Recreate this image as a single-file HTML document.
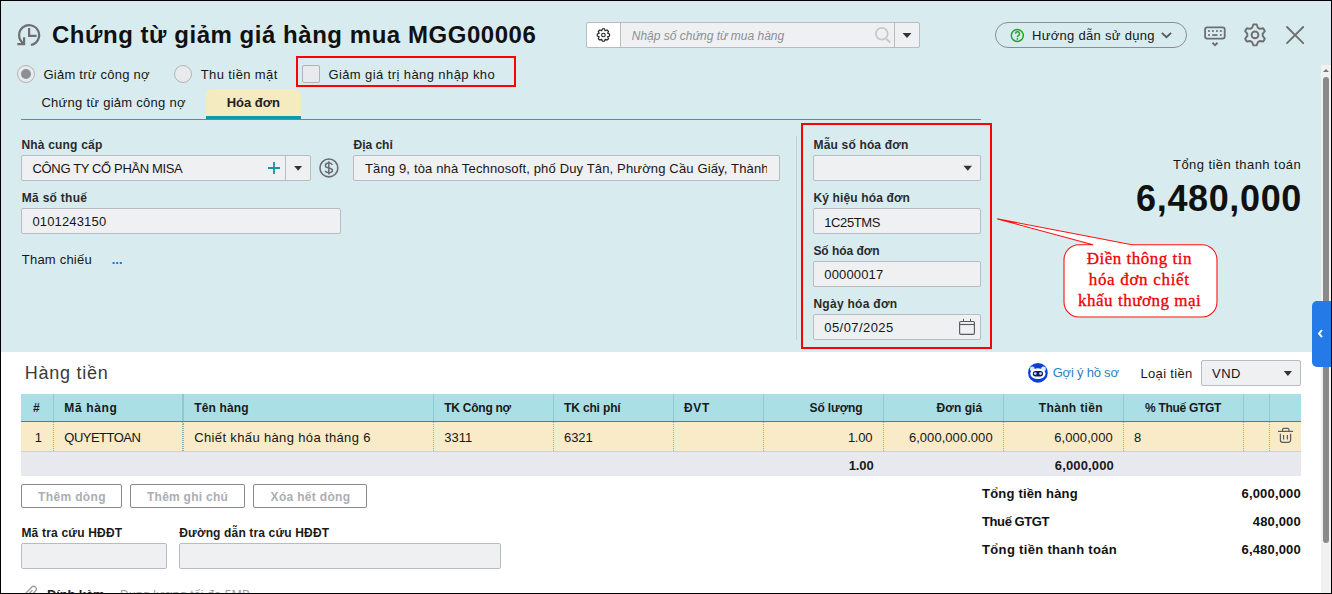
<!DOCTYPE html>
<html><head><meta charset="utf-8">
<style>
*{box-sizing:border-box;margin:0;padding:0}
html,body{width:1332px;height:594px;overflow:hidden;background:#fff}
body{font-family:"Liberation Sans",sans-serif;position:relative}
.b{position:absolute}
.t{position:absolute;white-space:nowrap}
.inp{position:absolute;background:#eff0f2;border:1px solid #b8bbc0;border-radius:2px}
svg{position:absolute;overflow:visible}
</style></head><body>
<div class="b" style="left:0;top:0;width:1332px;height:352px;background:#d8ecef"></div>
<!-- history icon -->
<svg style="left:0;top:0" width="60" height="60"><g fill="none" stroke="#6e6e72" stroke-width="2.2"><path d="M30.9 45 A10 10 0 1 0 22.8 42.9"/><path d="M29.1 28 V35.9 H36.6"/><path d="M17.3 44.1 H24.1 V37.3"/></g></svg>
<!-- search group -->
<div class="b" style="left:586px;top:22px;width:334px;height:26px;border:1px solid #b8bbc0;border-radius:2px;background:#eff0f2"></div>
<div class="b" style="left:587px;top:23px;width:34px;height:24px;background:#fff;border-right:1px solid #b8bbc0;border-radius:2px 0 0 2px"></div>
<div class="b" style="left:894px;top:23px;width:1px;height:24px;background:#b8bbc0"></div>
<svg style="left:0;top:0" width="1" height="1"><g fill="none" stroke="#c8c8c8" stroke-width="1.8"><circle cx="881.8" cy="33.8" r="5.9"/><path d="M886.4 38.9 L890.2 42.6" stroke-width="2.1"/></g><path d="M902.5 33 H911.5 L907 38 Z" fill="#333"/></svg>
<!-- help pill -->
<div class="b" style="left:995px;top:22px;width:192px;height:26px;border:1px solid #8d8d8d;border-radius:13px"></div>
<svg style="left:0;top:0" width="1" height="1"><circle cx="1017.3" cy="35.4" r="6" fill="none" stroke="#25a325" stroke-width="1.5"/><path d="M1015.5 33.8 A2 2 0 1 1 1018.2 35.6 C1017.7 36 1017.4 36.4 1017.4 37.3" fill="none" stroke="#25a325" stroke-width="1.4"/><circle cx="1017.4" cy="38.9" r="0.85" fill="#25a325"/><path d="M1161.8 32.9 L1166.5 37.3 L1171.1 32.9" fill="none" stroke="#575c60" stroke-width="1.9"/></svg>
<!-- keyboard / gear / close -->
<svg style="left:0;top:0" width="1" height="1"><g fill="none" stroke="#6d6d72" stroke-width="1.8"><rect x="1205.1" y="27.3" width="19.6" height="11.3" rx="2"/></g><g fill="#6d6d72"><rect x="1208.1" y="30.1" width="1.8" height="1.8"/><rect x="1212" y="30.1" width="1.8" height="1.8"/><rect x="1216.1" y="30.1" width="1.8" height="1.8"/><rect x="1219.9" y="30.1" width="1.8" height="1.8"/><rect x="1208.1" y="34.1" width="1.8" height="1.8"/><rect x="1219.9" y="34.1" width="1.8" height="1.8"/><rect x="1212.2" y="34.2" width="5.3" height="1.7"/></g><path d="M1212.4 42.8 L1215 45.2 L1217.6 42.8" fill="none" stroke="#6d6d72" stroke-width="1.9"/>
<path fill="none" stroke="#6d6d72" stroke-width="1.9" stroke-linejoin="round" d="M1252.12 27.76 L1253.36 24.53 A10.5 10.5 0 0 1 1256.64 24.53 L1257.88 27.76 A7.7 7.7 0 0 1 1259.74 28.83 L1263.16 28.29 A10.5 10.5 0 0 1 1264.80 31.14 L1262.63 33.83 A7.7 7.7 0 0 1 1262.63 35.97 L1264.80 38.66 A10.5 10.5 0 0 1 1263.16 41.51 L1259.74 40.97 A7.7 7.7 0 0 1 1257.88 42.04 L1256.64 45.27 A10.5 10.5 0 0 1 1253.36 45.27 L1252.12 42.04 A7.7 7.7 0 0 1 1250.26 40.97 L1246.84 41.51 A10.5 10.5 0 0 1 1245.20 38.66 L1247.37 35.97 A7.7 7.7 0 0 1 1247.37 33.83 L1245.20 31.14 A10.5 10.5 0 0 1 1246.84 28.29 L1250.26 28.83 A7.7 7.7 0 0 1 1252.12 27.76 Z"/><circle cx="1255" cy="34.9" r="3.4" fill="none" stroke="#6d6d72" stroke-width="1.9"/>
<path d="M1287 27 L1303.2 43.2 M1303.2 27 L1287 43.2" stroke="#707070" stroke-width="1.9" stroke-linecap="round"/></svg>
<!-- small gear in search -->
<svg style="left:0;top:0" width="1" height="1"><path fill="none" stroke="#1e1e1e" stroke-width="1.15" stroke-linejoin="round" d="M601.60 30.77 L602.32 28.89 A6.2 6.2 0 0 1 604.48 28.89 L605.20 30.77 A4.6 4.6 0 0 1 605.12 30.73 L606.96 29.92 A6.2 6.2 0 0 1 608.48 31.44 L607.67 33.28 A4.6 4.6 0 0 1 607.63 33.20 L609.51 33.92 A6.2 6.2 0 0 1 609.51 36.08 L607.63 36.80 A4.6 4.6 0 0 1 607.67 36.72 L608.48 38.56 A6.2 6.2 0 0 1 606.96 40.08 L605.12 39.27 A4.6 4.6 0 0 1 605.20 39.23 L604.48 41.11 A6.2 6.2 0 0 1 602.32 41.11 L601.60 39.23 A4.6 4.6 0 0 1 601.68 39.27 L599.84 40.08 A6.2 6.2 0 0 1 598.32 38.56 L599.13 36.72 A4.6 4.6 0 0 1 599.17 36.80 L597.29 36.08 A6.2 6.2 0 0 1 597.29 33.92 L599.17 33.20 A4.6 4.6 0 0 1 599.13 33.28 L598.32 31.44 A6.2 6.2 0 0 1 599.84 29.92 L601.68 30.73 A4.6 4.6 0 0 1 601.60 30.77 Z"/><circle cx="603.4" cy="35" r="1.8" fill="none" stroke="#1e1e1e" stroke-width="1.1"/></svg>
<!-- radios, checkbox -->
<div class="b" style="left:17px;top:65px;width:18px;height:18px;border-radius:50%;background:#e9eaee;border:1px solid #b3b3b3"></div>
<div class="b" style="left:21px;top:69px;width:10px;height:10px;border-radius:50%;background:#8a8f98"></div>
<div class="b" style="left:174px;top:65px;width:18px;height:18px;border-radius:50%;background:#e9eaee;border:1px solid #b3b3b3"></div>
<div class="b" style="left:296px;top:56px;width:220px;height:31px;border:2px solid #ff0000"></div>
<div class="b" style="left:302px;top:65px;width:18px;height:18px;border-radius:2px;background:#e9eaee;border:1px solid #b3b3b3"></div>
<!-- tabs -->
<div class="b" style="left:206px;top:89px;width:95px;height:27px;background:#f5ebc1;border-radius:6px 6px 0 0"></div>
<div class="b" style="left:206px;top:116px;width:95px;height:3px;background:#0f98a6"></div>
<div class="b" style="left:21px;top:119px;width:960px;height:1px;background:#21a6b3"></div>
<!-- supplier -->
<div class="inp" style="left:21px;top:155px;width:290px;height:26px"></div>
<div class="b" style="left:285px;top:156px;width:1px;height:24px;background:#b8bbc0"></div>
<svg style="left:0;top:0" width="1" height="1"><path d="M274 162 V174 M268 168 H280" stroke="#13959f" stroke-width="1.8"/><path d="M294.2 166 H302 L298.1 170.8 Z" fill="#333"/><circle cx="328.9" cy="167.9" r="8.95" fill="none" stroke="#6b6b72" stroke-width="1.6"/><g fill="none" stroke="#6b6b72" stroke-width="1.5"><path d="M332.4 164.8 C331.6 163.6 330.3 163.1 328.8 163.1 C326.8 163.1 325.4 164.1 325.4 165.7 C325.4 169 332.5 167.1 332.5 170.3 C332.5 171.9 331 172.7 328.8 172.7 C327 172.7 325.8 172.1 325.1 171"/><path d="M328.8 161.2 V174.6"/></g></svg>
<div class="inp" style="left:353px;top:155px;width:427px;height:26px;overflow:hidden"></div>
<div class="inp" style="left:21px;top:208px;width:320px;height:26px"></div>
<svg style="left:0;top:0" width="1" height="1"><g fill="#1f77c9"><rect x="112.6" y="262" width="2" height="2"/><rect x="116.2" y="262" width="2" height="2"/><rect x="119.8" y="262" width="2" height="2"/></g></svg>
<div class="b" style="left:796px;top:136px;width:1px;height:204px;background:#c8ced2"></div>
<div class="b" style="left:801px;top:123px;width:191px;height:226px;border:2px solid #ff0000"></div>
<div class="inp" style="left:813px;top:155px;width:168px;height:26px"></div>
<svg style="left:0;top:0" width="1" height="1"><path d="M963.5 165.8 H972 L967.8 170.8 Z" fill="#333"/></svg>
<div class="inp" style="left:813px;top:208px;width:168px;height:26px"></div>
<div class="inp" style="left:813px;top:261px;width:168px;height:26px"></div>
<div class="inp" style="left:813px;top:314px;width:168px;height:26px"></div>
<svg style="left:0;top:0" width="1" height="1"><g fill="none" stroke="#5a5b60" stroke-width="1.15"><rect x="959.6" y="321.5" width="14.8" height="12.8" rx="1.3"/><path d="M959.6 324.5 H974.4"/><path d="M963.5 318.8 V321.2 M970.5 318.8 V321.2" stroke-width="1"/></g></svg>
<!-- callout -->
<svg style="left:0;top:0" width="1" height="1"><path d="M1080 244.8 H1093 L997.3 218.9 L1132 244.8 H1202 A15 15 0 0 1 1217 259.8 V302 A15 15 0 0 1 1202 317 H1079 A15 15 0 0 1 1064 302 V259.8 A15 15 0 0 1 1079 244.8 Z" fill="#fff" stroke="#ff1010" stroke-width="1.1"/></svg>
<!-- right tab + scrollbar -->
<div class="b" style="left:1321px;top:65px;width:10px;height:528px;background:#f1f1f1"></div>
<svg style="left:0;top:0" width="1" height="1"><path d="M1323 72 H1329 L1326 69 Z" fill="#777"/></svg>
<div class="b" style="left:1323px;top:77px;width:6px;height:466px;background:#8a8a8a;border-radius:3px"></div>
<div class="b" style="left:1312px;top:301px;width:20px;height:65.5px;background:#247ae6;border-radius:5px 0 0 5px"></div>
<svg style="left:0;top:0" width="1" height="1"><path d="M1322 330 L1319 333.6 L1322 337.2" fill="none" stroke="#fff" stroke-width="1.9"/></svg>
<!-- table top controls -->
<svg style="left:0;top:0" width="1" height="1"><circle cx="1037.9" cy="372.8" r="9.9" fill="#0b40d8"/><circle cx="1032.3" cy="368.9" r="2.4" fill="#dfe8fb"/><circle cx="1043.5" cy="368.9" r="2.4" fill="#dfe8fb"/><ellipse cx="1037.9" cy="373.6" rx="7.6" ry="5.4" fill="#fff"/><rect x="1032.8" y="370.9" width="10.2" height="5.5" rx="2.7" fill="#0a1a5c"/><circle cx="1035.3" cy="373.6" r="1.4" fill="#c9d6f5"/><circle cx="1040.5" cy="373.6" r="1.4" fill="#c9d6f5"/></svg>
<div class="inp" style="left:1201px;top:360px;width:100px;height:26px"></div>
<svg style="left:0;top:0" width="1" height="1"><path d="M1283.8 371 H1292 L1287.9 376 Z" fill="#333"/></svg>
<!-- table -->
<div class="b" style="left:21px;top:394px;width:1280px;height:27px;background:#a9dfe5"></div>
<div class="b" style="left:21px;top:421px;width:1280px;height:1.5px;background:#1797a4"></div>
<div class="b" style="left:21px;top:422px;width:1280px;height:29px;background:#f9ebc8"></div>
<div class="b" style="left:21px;top:451px;width:1280px;height:1px;background:#cfd0d2"></div>
<div class="b" style="left:21px;top:452px;width:1280px;height:24px;background:#e8e9ee"></div>
<div class="b" style="left:53px;top:394px;width:1px;height:27px;background:#8fcbd2"></div>
<div class="b" style="left:53px;top:422px;width:0;height:29px;border-left:1px dotted #76b6c6"></div>
<div class="b" style="left:182px;top:394px;width:2px;height:27px;background:#93c6ce"></div>
<div class="b" style="left:182px;top:422px;width:0;height:29px;border-left:1px dotted #76b6c6"></div><div class="b" style="left:183px;top:423px;width:0;height:28px;border-left:1px dotted #76b6c6"></div>
<div class="b" style="left:433px;top:394px;width:1px;height:27px;background:#8fcbd2"></div>
<div class="b" style="left:433px;top:422px;width:0;height:29px;border-left:1px dotted #76b6c6"></div>
<div class="b" style="left:553px;top:394px;width:1px;height:27px;background:#8fcbd2"></div>
<div class="b" style="left:553px;top:422px;width:0;height:29px;border-left:1px dotted #76b6c6"></div>
<div class="b" style="left:673px;top:394px;width:1px;height:27px;background:#8fcbd2"></div>
<div class="b" style="left:673px;top:422px;width:0;height:29px;border-left:1px dotted #76b6c6"></div>
<div class="b" style="left:763px;top:394px;width:1px;height:27px;background:#8fcbd2"></div>
<div class="b" style="left:763px;top:422px;width:0;height:29px;border-left:1px dotted #76b6c6"></div>
<div class="b" style="left:883px;top:394px;width:1px;height:27px;background:#8fcbd2"></div>
<div class="b" style="left:883px;top:422px;width:0;height:29px;border-left:1px dotted #76b6c6"></div>
<div class="b" style="left:1003px;top:394px;width:1px;height:27px;background:#8fcbd2"></div>
<div class="b" style="left:1003px;top:422px;width:0;height:29px;border-left:1px dotted #76b6c6"></div>
<div class="b" style="left:1123px;top:394px;width:1px;height:27px;background:#8fcbd2"></div>
<div class="b" style="left:1123px;top:422px;width:0;height:29px;border-left:1px dotted #76b6c6"></div>
<div class="b" style="left:1243px;top:394px;width:1px;height:27px;background:#8fcbd2"></div>
<div class="b" style="left:1243px;top:422px;width:0;height:29px;border-left:1px dotted #76b6c6"></div>
<div class="b" style="left:1269px;top:394px;width:1px;height:27px;background:#8fcbd2"></div>
<div class="b" style="left:1269px;top:422px;width:0;height:29px;border-left:1px dotted #76b6c6"></div>

<svg style="left:0;top:0" width="1" height="1"><g fill="none" stroke="#5c5d64" stroke-width="1.25"><path d="M1278 431.4 H1293.1"/><path d="M1282.6 431.2 V429.6 A1.3 1.3 0 0 1 1283.9 428.3 H1287.6 A1.3 1.3 0 0 1 1288.9 429.6 V431.2"/><path d="M1280.4 433.8 V440 A2.3 2.3 0 0 0 1282.7 442.3 H1288.3 A2.3 2.3 0 0 0 1290.6 440 V433.8"/><path d="M1283.6 435 V439.6 M1287.4 435 V439.6"/></g></svg>
<!-- buttons -->
<div class="b" style="left:21px;top:484px;width:101px;height:24px;border:1px solid #86898f;border-radius:2px"></div>
<div class="b" style="left:130px;top:484px;width:115px;height:24px;border:1px solid #86898f;border-radius:2px"></div>
<div class="b" style="left:253px;top:484px;width:114px;height:24px;border:1px solid #86898f;border-radius:2px"></div>
<div class="inp" style="left:21px;top:543px;width:146px;height:26px"></div>
<div class="inp" style="left:179px;top:543px;width:322px;height:26px"></div>
<svg style="left:0;top:0" width="1" height="1"><path d="M24.2 595 L31.6 587.2 A2.7 2.7 0 0 1 35.5 591 L31.5 595.2 M27.8 595 L32.4 590.2" fill="none" stroke="#9b9b9b" stroke-width="1.3"/></svg>

<div class="t" style="left:52.00px;top:22.70px;font-size:24px;line-height:24px;color:#111;font-weight:bold;letter-spacing:0.537px;">Chứng từ giảm giá hàng mua MGG00006</div>
<div class="t" style="left:631.80px;top:30.00px;font-size:12px;line-height:12px;color:#8a8f96;font-style:italic;letter-spacing:-0.011px;">Nhập số chứng từ mua hàng</div>
<div class="t" style="left:1032.00px;top:29.00px;font-size:13px;line-height:13px;color:#161616;letter-spacing:0.294px;">Hướng dẫn sử dụng</div>
<div class="t" style="left:43.50px;top:67.70px;font-size:13px;line-height:13px;color:#161616;letter-spacing:0.236px;">Giảm trừ công nợ</div>
<div class="t" style="left:200.80px;top:67.70px;font-size:13px;line-height:13px;color:#161616;letter-spacing:0.387px;">Thu tiền mặt</div>
<div class="t" style="left:328.40px;top:67.70px;font-size:13px;line-height:13px;color:#161616;letter-spacing:0.409px;">Giảm giá trị hàng nhập kho</div>
<div class="t" style="left:41.40px;top:95.90px;font-size:13px;line-height:13px;color:#161616;letter-spacing:0.273px;">Chứng từ giảm công nợ</div>
<div class="t" style="left:226.70px;top:95.90px;font-size:13px;line-height:13px;color:#222;font-weight:bold;">Hóa đơn</div>
<div class="t" style="left:21.40px;top:139.00px;font-size:12px;line-height:12px;color:#2a2a2a;font-weight:bold;letter-spacing:0.195px;">Nhà cung cấp</div>
<div class="t" style="left:32.60px;top:161.60px;font-size:13px;line-height:13px;color:#161616;letter-spacing:-0.363px;">CÔNG TY CỔ PHẦN MISA</div>
<div class="t" style="left:353.50px;top:138.90px;font-size:12px;line-height:12px;color:#2a2a2a;font-weight:bold;letter-spacing:-0.019px;">Địa chỉ</div>
<div class="b" style="left:354px;top:0;width:413px;height:594px;overflow:hidden"><div style="position:absolute;left:-354px;top:0;width:1332px;height:594px"><div class="t" style="left:365.00px;top:161.60px;font-size:13px;line-height:13px;color:#161616;letter-spacing:0.15px;">Tầng 9, tòa nhà Technosoft, phố Duy Tân, Phường Cầu Giấy, Thành phố Hà Nội</div></div></div>
<div class="t" style="left:21.80px;top:191.70px;font-size:12px;line-height:12px;color:#2a2a2a;font-weight:bold;letter-spacing:0.278px;">Mã số thuế</div>
<div class="t" style="left:32.40px;top:214.90px;font-size:13px;line-height:13px;color:#161616;letter-spacing:0.159px;">0101243150</div>
<div class="t" style="left:21.80px;top:252.80px;font-size:13px;line-height:13px;color:#161616;letter-spacing:0.212px;">Tham chiếu</div>
<div class="t" style="left:813.60px;top:138.90px;font-size:12px;line-height:12px;color:#2a2a2a;font-weight:bold;letter-spacing:0.161px;">Mẫu số hóa đơn</div>
<div class="t" style="left:813.40px;top:192.20px;font-size:12px;line-height:12px;color:#2a2a2a;font-weight:bold;letter-spacing:0.142px;">Ký hiệu hóa đơn</div>
<div class="t" style="left:824.30px;top:215.50px;font-size:13px;line-height:13px;color:#161616;letter-spacing:-0.408px;">1C25TMS</div>
<div class="t" style="left:813.40px;top:245.10px;font-size:12px;line-height:12px;color:#2a2a2a;font-weight:bold;letter-spacing:-0.033px;">Số hóa đơn</div>
<div class="t" style="left:824.30px;top:268.40px;font-size:13px;line-height:13px;color:#161616;letter-spacing:0.156px;">00000017</div>
<div class="t" style="left:813.40px;top:298.00px;font-size:12px;line-height:12px;color:#2a2a2a;font-weight:bold;letter-spacing:0.281px;">Ngày hóa đơn</div>
<div class="t" style="left:824.30px;top:320.80px;font-size:13px;line-height:13px;color:#161616;letter-spacing:0.430px;">05/07/2025</div>
<div class="t" style="left:1173.00px;top:157.80px;font-size:13px;line-height:13px;color:#161616;letter-spacing:0.446px;">Tổng tiền thanh toán</div>
<div class="t" style="left:1136.10px;top:180.60px;font-size:36px;line-height:36px;color:#111;font-weight:bold;letter-spacing:0.633px;">6,480,000</div>
<div class="t" style="left:1086.80px;top:250.20px;font-size:17px;line-height:17px;color:#f00000;font-family:'Liberation Serif',serif;letter-spacing:0.491px;-webkit-text-stroke:0.3px #f00000;">Điền thông tin</div>
<div class="t" style="left:1088.70px;top:271.10px;font-size:17px;line-height:17px;color:#f00000;font-family:'Liberation Serif',serif;letter-spacing:0.688px;-webkit-text-stroke:0.3px #f00000;">hóa đơn chiết</div>
<div class="t" style="left:1078.00px;top:292.20px;font-size:17px;line-height:17px;color:#f00000;font-family:'Liberation Serif',serif;letter-spacing:0.519px;-webkit-text-stroke:0.3px #f00000;">khấu thương mại</div>
<div class="t" style="left:24.80px;top:364.20px;font-size:18px;line-height:18px;color:#3a3a3a;letter-spacing:0.745px;">Hàng tiền</div>
<div class="t" style="left:1052.70px;top:366.10px;font-size:13px;line-height:13px;color:#2a7fc4;letter-spacing:-0.212px;">Gợi ý hồ sơ</div>
<div class="t" style="left:1140.50px;top:366.50px;font-size:13px;line-height:13px;color:#161616;letter-spacing:0.323px;">Loại tiền</div>
<div class="t" style="left:1212.00px;top:366.70px;font-size:13px;line-height:13px;color:#161616;letter-spacing:0.470px;">VND</div>
<div class="t" style="left:33.10px;top:402.20px;font-size:12px;line-height:12px;color:#1a1a1a;font-weight:bold;">#</div>
<div class="t" style="left:64.30px;top:402.20px;font-size:12px;line-height:12px;color:#1a1a1a;font-weight:bold;letter-spacing:0.644px;">Mã hàng</div>
<div class="t" style="left:194.30px;top:402.20px;font-size:12px;line-height:12px;color:#1a1a1a;font-weight:bold;letter-spacing:0.143px;">Tên hàng</div>
<div class="t" style="left:444.30px;top:402.20px;font-size:12px;line-height:12px;color:#1a1a1a;font-weight:bold;letter-spacing:-0.261px;">TK Công nợ</div>
<div class="t" style="left:564.10px;top:402.20px;font-size:12px;line-height:12px;color:#1a1a1a;font-weight:bold;letter-spacing:-0.162px;">TK chi phí</div>
<div class="t" style="left:684.00px;top:402.20px;font-size:12px;line-height:12px;color:#1a1a1a;font-weight:bold;letter-spacing:0.665px;">ĐVT</div>
<div class="t" style="left:809.50px;top:402.20px;font-size:12px;line-height:12px;color:#1a1a1a;font-weight:bold;letter-spacing:-0.108px;">Số lượng</div>
<div class="t" style="left:936.60px;top:402.20px;font-size:12px;line-height:12px;color:#1a1a1a;font-weight:bold;letter-spacing:0.062px;">Đơn giá</div>
<div class="t" style="left:1038.80px;top:402.20px;font-size:12px;line-height:12px;color:#1a1a1a;font-weight:bold;letter-spacing:0.341px;">Thành tiền</div>
<div class="t" style="left:1145.10px;top:402.20px;font-size:12px;line-height:12px;color:#1a1a1a;font-weight:bold;letter-spacing:-0.310px;">% Thuế GTGT</div>
<div class="t" style="left:34.80px;top:430.70px;font-size:13px;line-height:13px;color:#161616;">1</div>
<div class="t" style="left:64.30px;top:430.70px;font-size:13px;line-height:13px;color:#161616;letter-spacing:-0.521px;">QUYETTOAN</div>
<div class="t" style="left:194.30px;top:430.70px;font-size:13px;line-height:13px;color:#161616;letter-spacing:0.352px;">Chiết khấu hàng hóa tháng 6</div>
<div class="t" style="left:444.30px;top:430.70px;font-size:13px;line-height:13px;color:#161616;">3311</div>
<div class="t" style="left:564.10px;top:430.70px;font-size:13px;line-height:13px;color:#161616;letter-spacing:-0.097px;">6321</div>
<div class="t" style="left:847.90px;top:430.70px;font-size:13px;line-height:13px;color:#161616;letter-spacing:-0.257px;">1.00</div>
<div class="t" style="left:908.90px;top:430.70px;font-size:13px;line-height:13px;color:#161616;letter-spacing:0.050px;">6,000,000.000</div>
<div class="t" style="left:1054.20px;top:430.70px;font-size:13px;line-height:13px;color:#161616;letter-spacing:0.087px;">6,000,000</div>
<div class="t" style="left:1134.10px;top:430.70px;font-size:13px;line-height:13px;color:#161616;">8</div>
<div class="t" style="left:848.70px;top:458.70px;font-size:13px;line-height:13px;color:#1a1a1a;font-weight:bold;letter-spacing:-0.124px;">1.00</div>
<div class="t" style="left:1054.80px;top:458.70px;font-size:13px;line-height:13px;color:#1a1a1a;font-weight:bold;letter-spacing:0.137px;">6,000,000</div>
<div class="t" style="left:38.00px;top:491.00px;font-size:12px;line-height:12px;color:#abaeb3;font-weight:bold;letter-spacing:0.359px;">Thêm dòng</div>
<div class="t" style="left:147.00px;top:491.00px;font-size:12px;line-height:12px;color:#abaeb3;font-weight:bold;letter-spacing:0.257px;">Thêm ghi chú</div>
<div class="t" style="left:270.60px;top:491.00px;font-size:12px;line-height:12px;color:#abaeb3;font-weight:bold;letter-spacing:0.312px;">Xóa hết dòng</div>
<div class="t" style="left:21.40px;top:526.70px;font-size:12px;line-height:12px;color:#1a1a1a;font-weight:bold;letter-spacing:0.193px;">Mã tra cứu HĐĐT</div>
<div class="t" style="left:179.30px;top:526.70px;font-size:12px;line-height:12px;color:#1a1a1a;font-weight:bold;letter-spacing:0.150px;">Đường dẫn tra cứu HĐĐT</div>
<div class="t" style="left:982.10px;top:486.80px;font-size:13px;line-height:13px;color:#111;font-weight:bold;letter-spacing:0.184px;">Tổng tiền hàng</div>
<div class="t" style="left:982.10px;top:514.80px;font-size:13px;line-height:13px;color:#111;font-weight:bold;letter-spacing:-0.429px;">Thuế GTGT</div>
<div class="t" style="left:982.10px;top:542.80px;font-size:13px;line-height:13px;color:#111;font-weight:bold;letter-spacing:0.321px;">Tổng tiền thanh toán</div>
<div class="t" style="left:1241.60px;top:486.80px;font-size:13px;line-height:13px;color:#111;font-weight:bold;letter-spacing:0.150px;">6,000,000</div>
<div class="t" style="left:1252.80px;top:514.80px;font-size:13px;line-height:13px;color:#111;font-weight:bold;letter-spacing:0.140px;">480,000</div>
<div class="t" style="left:1241.60px;top:542.80px;font-size:13px;line-height:13px;color:#111;font-weight:bold;letter-spacing:0.150px;">6,480,000</div>
<div class="t" style="left:47.00px;top:588.00px;font-size:13px;line-height:13px;color:#222;font-weight:bold;letter-spacing:-0.136px;">Đính kèm</div>
<div class="t" style="left:120.00px;top:589.00px;font-size:12px;line-height:12px;color:#9a9a9a;letter-spacing:0.268px;">Dung lượng tối đa 5MB</div>
<!-- border -->
<div class="b" style="left:0;top:0;width:1332px;height:1px;background:#000"></div>
<div class="b" style="left:0;top:0;width:1px;height:594px;background:#000"></div>
<div class="b" style="left:1331px;top:0;width:1px;height:594px;background:#000"></div>
<div class="b" style="left:0;top:593px;width:1332px;height:1px;background:#000"></div>

</body></html>
